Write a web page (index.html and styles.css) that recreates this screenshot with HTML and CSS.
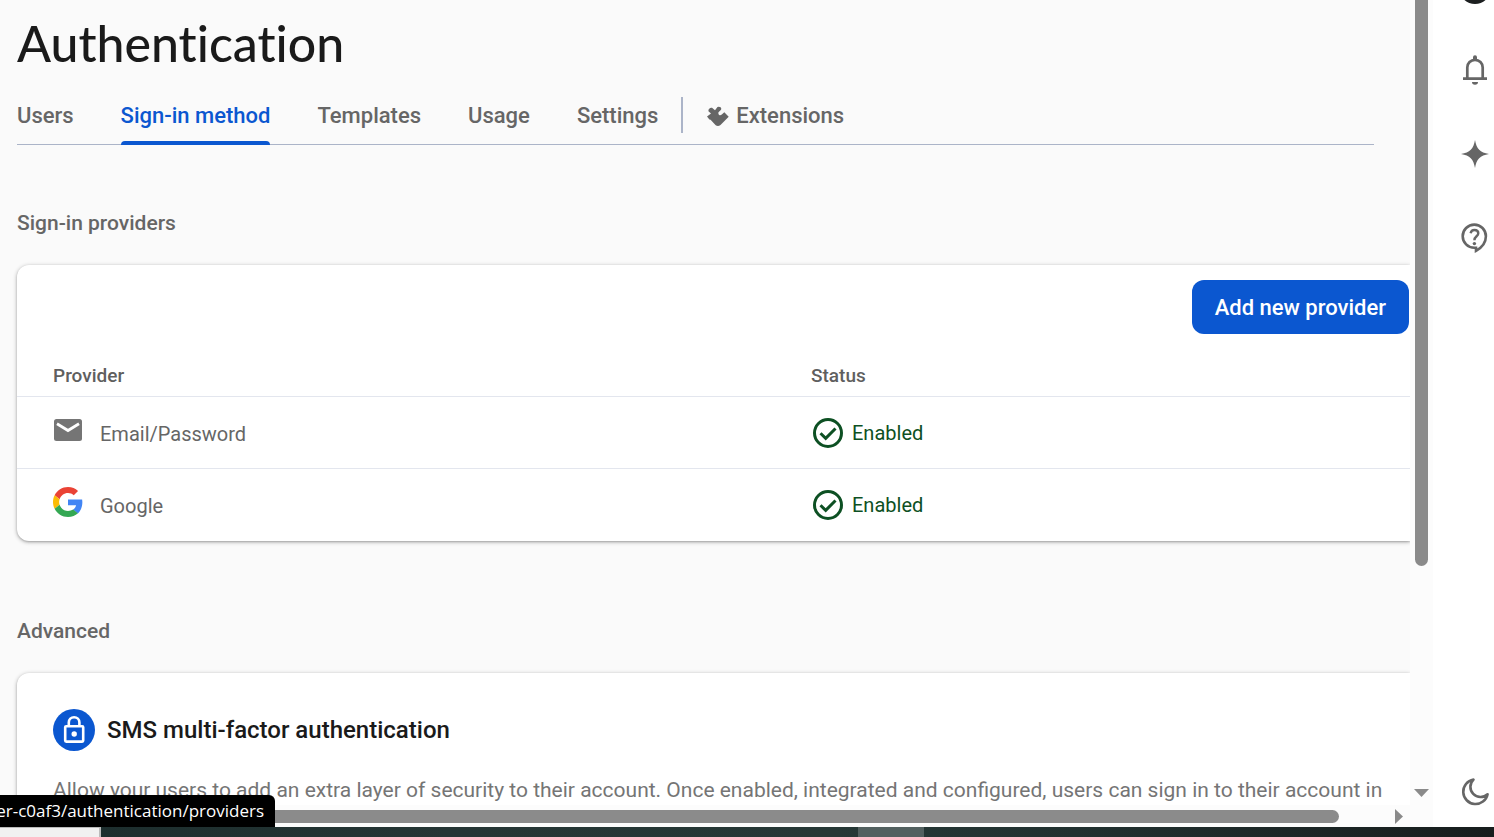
FILE: index.html
```html
<!DOCTYPE html>
<html lang="en">
<head>
<meta charset="utf-8">
<title>Authentication</title>
<link rel="stylesheet" href="styles.css">
</head>
<body>
<div class="screen">
  <div class="workspace">
    <div class="pane">
      <main class="content">
        <h1 class="title">Authentication</h1>
        <nav class="tabs">
          <a class="tab" href="#users">Users</a>
          <a class="tab tab-active" href="#method">Sign-in method</a>
          <a class="tab" href="#templates">Templates</a>
          <a class="tab" href="#usage">Usage</a>
          <a class="tab" href="#settings">Settings</a>
          <span class="divider"></span>
          <a class="tab tab-ext" href="#extensions">
            <svg class="ext-icon" viewBox="0 0 22 20"><path fill="#666" d="M0 10.500L4 7.400L1.700 5.600Q1 4.500 2 3Q3.400 1.400 5 1.800L8 4.200L10.500 1Q12 .2 13.600 1.200Q14.800 2.500 13.800 4L11.500 6.300Q11 8.300 12.200 9Q13.500 9.600 14.800 8.600L17.300 6.200L21.700 10.700L13.500 19Q11 20.800 8.700 19.200L4.500 14.800Q3.500 13.500 2.400 13.600Z"/></svg>
            Extensions</a>
        </nav>
        <h2 class="section-title">Sign-in providers</h2>
        <section class="card">
          <div class="card-actions"><button class="primary" type="button">Add new provider</button></div>
          <table class="providers">
            <thead><tr><th class="col-provider" scope="col">Provider</th><th scope="col">Status</th></tr></thead>
            <tbody>
              <tr>
                <td><div class="provider"><svg class="provider-icon" viewBox="0 0 30 30"><rect x="1" y="4" width="28" height="22" rx="2.500" fill="#757575"/><path d="M4 8.800l11 6.700 11-6.700" fill="none" stroke="#fff" stroke-width="2.800"/></svg><span>Email/Password</span></div></td>
                <td><div class="status"><svg class="status-icon" viewBox="0 0 30 30"><circle cx="15" cy="15" r="13.500"/><path d="M7.500 15.300l5.200 5.100 9.800-9.900"/></svg><span>Enabled</span></div></td>
              </tr>
              <tr>
                <td><div class="provider"><svg class="provider-icon" viewBox="0 0 48 48"><path fill="#EA4335" d="M24 9.500c3.540 0 6.710 1.220 9.210 3.600l6.850-6.850C35.900 2.380 30.470 0 24 0 14.620 0 6.510 5.380 2.560 13.220l7.980 6.190C12.430 13.720 17.740 9.500 24 9.500z"/><path fill="#4285F4" d="M46.980 24.550c0-1.570-.15-3.090-.38-4.550H24v9.020h12.940c-.58 2.960-2.260 5.480-4.780 7.180l7.730 6c4.510-4.180 7.090-10.360 7.090-17.650z"/><path fill="#FBBC05" d="M10.530 28.590c-.48-1.450-.76-2.990-.76-4.590s.27-3.140.76-4.590l-7.980-6.190C.92 16.460 0 20.120 0 24c0 3.880.92 7.540 2.560 10.780l7.970-6.190z"/><path fill="#34A853" d="M24 48c6.480 0 11.930-2.130 15.890-5.810l-7.730-6c-2.150 1.450-4.920 2.300-8.160 2.300-6.260 0-11.570-4.220-13.470-9.910l-7.980 6.190C6.510 42.620 14.620 48 24 48z"/></svg><span>Google</span></div></td>
                <td><div class="status"><svg class="status-icon" viewBox="0 0 30 30"><circle cx="15" cy="15" r="13.500"/><path d="M7.500 15.300l5.200 5.100 9.800-9.900"/></svg><span>Enabled</span></div></td>
              </tr>
            </tbody>
          </table>
        </section>
        <h2 class="section-title">Advanced</h2>
        <section class="card card-mfa">
          <h3 class="mfa-title">
            <svg class="mfa-icon" viewBox="0 0 42 42"><circle cx="21" cy="21" r="21" fill="#0b57d0"/><g fill="none" stroke="#fff" stroke-width="2.600"><rect x="12.200" y="17.200" width="18" height="15.400" rx="1"/><path d="M15.800 17v-3.500a5.300 5.300 0 0 1 10.600 0V17"/></g><circle cx="21.200" cy="25" r="2.700" fill="#fff"/></svg>
            SMS multi-factor authentication</h3>
          <p class="mfa-text">Allow your users to add an extra layer of security to their account. Once enabled, integrated and configured, users can sign in to their account in</p>
        </section>
      </main>
      <div class="scroll-x"><div class="thumb-x"></div><svg class="arrow-x" viewBox="0 0 8 15"><path fill="#8a8a8a" d="M0 0L8 7.500L0 15z"/></svg></div>
      <div class="link-status">er-c0af3/authentication/providers</div>
    </div>
    <div class="scroll-y"><div class="thumb-y"></div><svg class="arrow-y" viewBox="0 0 15 8"><path fill="#8a8a8a" d="M0 0H15L7.500 8z"/></svg></div>
    <aside class="rail">
      <button class="avatar" type="button" aria-label="Account"></button>
      <button class="rail-button" type="button" aria-label="Notifications"><svg viewBox="0 0 32 32"><path d="M8.300 24V13.500a7.700 7.700 0 0 1 15.400 0V24" fill="none" stroke="#666" stroke-width="2.700"/><path d="M4 23.200h24v2.700H4zM13 28h6a3 2.800 0 0 1-6 0zM14 6V3.200a2 2 0 0 1 4 0V6z" fill="#666"/></svg></button>
      <button class="rail-button" type="button" aria-label="Assistant"><svg viewBox="0 0 32 32"><path d="M16 2C17.500 11 21 14.500 30 16C21 17.500 17.500 21 16 30C14.500 21 11 17.500 2 16C11 14.500 14.500 11 16 2z" fill="#666"/></svg></button>
      <button class="rail-button" type="button" aria-label="Help"><svg viewBox="0 0 32 32"><path d="M17 25.800H15.300A11.600 11.600 0 1 1 26.900 14.200C26.900 20.600 22.700 25.600 17 28.800V25.800z" fill="none" stroke="#666" stroke-width="2.600"/><path d="M11.600 11.300C12.100 9 13.500 8 15.400 8C17.800 8 19.300 9.400 19.300 11.300C19.300 14.300 15.400 14.300 15.400 18.200" fill="none" stroke="#666" stroke-width="2.400"/><circle cx="15.400" cy="21.600" r="1.700" fill="#666"/></svg></button>
      <button class="rail-button rail-theme" type="button" aria-label="Theme"><svg viewBox="0 0 32 32"><path d="M14.500 3.600A12.300 12.300 0 1 0 28.600 18.200A8.300 8.300 0 0 1 14.500 3.600z" fill="none" stroke="#666" stroke-width="2.600" stroke-linejoin="round"/></svg></button>
    </aside>
  </div>
  <footer class="taskbar"><div class="taskbar-search"></div><div class="taskbar-item"></div></footer>
</div>
</body>
</html>
```
FILE: styles.css
```css
* { box-sizing: border-box; }
body { margin: 0; background: #fff; font-family: Roboto, "Liberation Sans", sans-serif; color: #666; }
.screen { display: flex; flex-direction: column; height: 100vh; overflow: hidden; }
.workspace { display: flex; flex: 1; min-height: 0; }
.pane { position: relative; display: flex; flex-direction: column; flex: 1; min-width: 0; }
.content { flex: 1; min-height: 0; overflow: hidden; padding-left: 17px; background: #fafafa; }
.title { margin: 0; padding-top: 10px; font: 500 50px/66px Lato, "Open Sans", sans-serif; font-variant-ligatures: none; color: #1a1a1a; }
.tabs { display: flex; align-items: center; height: 59px; margin: 10px 36px 0 0; border-bottom: 1px solid #abb4c8; }
.tab { display: flex; align-items: center; height: 60px; margin-right: 47px; padding-top: 2px; border: solid transparent; border-width: 4px 0; font-size: 22px; font-weight: 500; line-height: 24px; color: #666; text-decoration: none; white-space: nowrap; }
.tab-active { position: relative; color: #0b57d0; }
.tab-active::after { content: ""; position: absolute; left: 0; right: 0; bottom: -4px; height: 4px; border-radius: 4px 4px 0 0; background: #0b57d0; }
.divider { width: 2px; height: 36px; margin: 0 24px 0 -24px; background: #abb4c8; }
.tab-ext { gap: 7px; margin-right: 0; }
.ext-icon { width: 22px; height: 20px; }
.section-title { margin: 0; padding: 66px 0 30px; font-size: 21px; font-weight: 500; line-height: 24px; color: #666; }
.card { border-radius: 12px 0 0 12px; background: #fff; box-shadow: 0 1px 4px rgba(0, 0, 0, .3), 0 1px 2px rgba(0, 0, 0, .16); }
.card-actions { display: flex; justify-content: flex-end; padding: 15px 1px 21px 0; }
.primary { height: 54px; padding: 2px 23px 0; border: 0; border-radius: 12px; background: #0b57d0; color: #fff; font: 500 22px/24px Roboto, sans-serif; }
.providers { width: 100%; table-layout: fixed; border-collapse: separate; border-spacing: 0; }
.providers th { height: 42px; padding: 0; border-bottom: 1px solid #e3e6ee; font-size: 19px; font-weight: 500; line-height: 24px; text-align: left; color: #5f5f5f; }
.providers .col-provider { width: 57%; padding-left: 36px; }
.providers td { height: 72px; padding: 0; border-bottom: 1px solid #e3e6ee; font-size: 20px; line-height: 24px; }
.providers td:first-child { padding-left: 36px; }
.providers tr:last-child td { border-bottom-color: transparent; }
.provider { display: flex; align-items: center; gap: 17px; padding-top: 2px; }
.provider-icon { width: 30px; height: 30px; margin-bottom: 8px; }
.status { display: flex; align-items: center; gap: 9px; padding-left: 2px; color: #0d5023; }
.status-icon { width: 30px; height: 30px; fill: none; stroke: #0d5023; stroke-width: 3; }
.card + .section-title { padding-top: 78px; }
.card-mfa { padding: 36px 0 60px 36px; }
.mfa-title { display: flex; align-items: center; gap: 12px; margin: 0; font-size: 24px; font-weight: 500; line-height: 32px; color: #1a1a1a; }
.mfa-icon { width: 42px; height: 42px; }
.mfa-text { margin: 24px 0 0; font-size: 21px; line-height: 30px; color: #757575; white-space: nowrap; }
.scroll-x { display: flex; align-items: center; flex: none; height: 22px; background: #fcfcfc; }
.thumb-x { flex: 1; height: 13px; border-radius: 0 7px 7px 0; background: #8b8b8b; }
.arrow-x { width: 8px; height: 15px; margin: 0 7px 0 56px; }
.link-status { position: absolute; left: 0; bottom: 0; display: flex; justify-content: flex-end; width: 275px; height: 32px; padding-right: 11px; overflow: hidden; border-radius: 0 6px 0 0; background: #000; color: #fff; font: 400 17px/32px "Open Sans", "Noto Sans", sans-serif; white-space: nowrap; }
.scroll-y { display: flex; flex: none; flex-direction: column; align-items: center; justify-content: space-between; width: 23px; padding-bottom: 30px; background: #fcfcfc; }
.thumb-y { width: 13px; height: 71%; border-radius: 0 0 7px 7px; background: #8b8b8b; }
.arrow-y { width: 15px; height: 8px; }
.rail { display: flex; flex: none; flex-direction: column; align-items: flex-start; gap: 52px; width: 61px; padding: 0 0 19px 26px; background: #fff; }
.avatar { width: 32px; height: 32px; margin: -28px 0 -2px; padding: 0; border: 0; border-radius: 50%; background: #1c1f20; }
.rail-button { width: 32px; height: 32px; padding: 0; border: 0; background: none; }
.rail-button svg { display: block; width: 32px; height: 32px; }
.rail-theme { margin-top: auto; }
.taskbar { display: flex; flex: none; justify-content: space-between; height: 10px; background: linear-gradient(90deg, #1b2c2c, #253635 30%, #263836 56%, #213130 72%, #171d1d); }
.taskbar-search { width: 101px; border: solid #bbb; border-width: 1px 2px 0 0; background: #f1f1f1; }
.taskbar-item { width: 66px; margin-right: 570px; background: #52605f; }
```
